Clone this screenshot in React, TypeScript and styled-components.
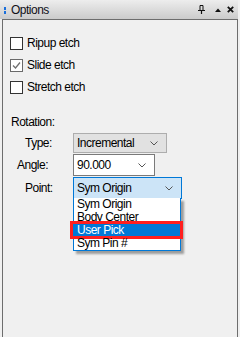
import React from "react";
import styled, { createGlobalStyle } from "styled-components";

const GlobalStyle = createGlobalStyle`
  html, body {
    margin: 0;
    padding: 0;
    background: #f0f0f0;
  }
  body {
    font-family: "Liberation Sans", Arial, sans-serif;
    font-size: 12px;
    letter-spacing: -0.5px;
    color: #000;
  }
`;

const Panel = styled.div`
    width: 238px;
    height: 337px;
    display: flex;
    flex-direction: column;
  `,
  TitleBar = styled.div`
    height: 19px;
    display: flex;
    align-items: center;
    padding: 0 4px 0 4px;
    background: linear-gradient(#ededed, #cbcbcb);
  `,
  Grip = styled.div`
    display: flex;
    flex-direction: column;
    gap: 1px;
    margin-top: 1px;
    &::before,
    &::after {
      content: "";
      width: 2px;
      height: 3px;
      background: #1a6fdc;
    }
  `,
  Title = styled.span`
    margin-left: 5px;
    color: #101018;
    flex: 1;
  `,
  TitleIcons = styled.div`
    display: flex;
    align-items: center;
    gap: 10px;
    & > svg:last-child {
      margin-left: -4px;
    }
  `,
  Body = styled.div`
    flex: 1;
    margin-left: 2px;
    border: 1px solid #6d6d6d;
    border-bottom: none;
    background: #f0f0f0;
    padding: 17px 0 0 7px;
    position: relative;
  `,
  CheckRow = styled.label<{ $first?: boolean }>`
    display: flex;
    align-items: center;
    gap: 4px;
    height: 22px;
    margin-top: ${({ $first }) => ($first ? "-5px" : "0")};
  `,
  Box = styled.span<{ $checked?: boolean }>`
    width: 11px;
    height: 11px;
    border: 1px solid ${({ $checked }) => ($checked ? "#6a6a6a" : "#333")};
    background: #fff;
    display: flex;
    align-items: center;
    justify-content: center;
  `,
  Section = styled.div`
    margin: 16px 0 0 1px;
    height: 16px;
    display: flex;
    align-items: center;
  `,
  FieldRow = styled.div<{ $gap: number }>`
    display: flex;
    align-items: center;
    margin-top: ${({ $gap }) => `${$gap}px`};
    margin-left: -4px;
    position: relative;
  `,
  FieldLabel = styled.span<{ $indent: number }>`
    width: ${({ $indent }) => `${67 - $indent}px`};
    padding-left: ${({ $indent }) => `${$indent}px`};
  `,
  Combo = styled.div<{ $w: number; $h: number; $variant: "gray" | "white" | "focus" }>`
    box-sizing: border-box;
    width: ${({ $w }) => `${$w}px`};
    height: ${({ $h }) => `${$h}px`};
    display: flex;
    align-items: center;
    justify-content: space-between;
    padding: 0 8px 0 3px;
    border: 1px solid
      ${({ $variant }) =>
        $variant === "gray" ? "#adadad" : $variant === "white" ? "#7a7a7a" : "#0078d7"};
    background: ${({ $variant }) =>
      $variant === "gray" ? "#e1e1e1" : $variant === "white" ? "#fff" : "#cce4f7"};
  `,
  DropList = styled.div`
    position: absolute;
    left: 67px;
    top: 21px;
    width: 108px;
    box-sizing: border-box;
    border: 1px solid #0078d7;
    border-top: none;
    background: #fff;
    box-shadow: 3px 3px 2px rgba(0, 0, 0, 0.35);
    z-index: 2;
  `,
  Item = styled.div<{ $selected?: boolean }>`
    position: relative;
    height: 13px;
    line-height: 13px;
    padding-left: 3px;
    background: ${({ $selected }) => ($selected ? "#0078d7" : "transparent")};
    color: ${({ $selected }) => ($selected ? "#fff" : "#000")};
  `,
  Marker = styled.div`
    position: absolute;
    left: -4px;
    right: -3px;
    top: -3px;
    bottom: -2px;
    border: 3px solid #ff1f1f;
    pointer-events: none;
  `;

const Chevron = () => (
  <svg width="8" height="5" viewBox="0 0 8 5">
    <path d="M0.5 0.5 L4 4 L7.5 0.5" fill="none" stroke="#555" strokeWidth="1" />
  </svg>
);

const Check = () => (
  <svg width="11" height="11" viewBox="0 0 11 11">
    <path d="M2 5.5 L4.5 8 L9 2.5" fill="none" stroke="#707070" strokeWidth="1.3" />
  </svg>
);

const PinIcon = () => (
  <svg width="7" height="9" viewBox="0 0 7 9">
    <path d="M2 0.5 H5 V5 M2 0.5 V5" fill="none" stroke="#111" strokeWidth="1" />
    <path d="M0 5.5 H7 M3.5 5.5 V9" fill="none" stroke="#111" strokeWidth="1.2" />
  </svg>
);

const UpIcon = () => (
  <svg width="6" height="4" viewBox="0 0 6 4">
    <path d="M0 4 L3 0.5 L6 4 Z" fill="#111" />
  </svg>
);

const CloseIcon = () => (
  <svg width="7" height="7" viewBox="0 0 7 7">
    <path d="M0.8 0.8 L6.2 6.2 M6.2 0.8 L0.8 6.2" stroke="#111" strokeWidth="1.8" />
  </svg>
);

const options = ["Sym Origin", "Body Center", "User Pick", "Sym Pin #"];

const App: React.FC = () => (
  <>
    <GlobalStyle />
    <Panel>
      <TitleBar>
        <Grip />
        <Title>Options</Title>
        <TitleIcons>
          <PinIcon />
          <UpIcon />
          <CloseIcon />
        </TitleIcons>
      </TitleBar>
      <Body>
        <CheckRow $first>
          <Box />
          Ripup etch
        </CheckRow>
        <CheckRow>
          <Box $checked>
            <Check />
          </Box>
          Slide etch
        </CheckRow>
        <CheckRow>
          <Box />
          Stretch etch
        </CheckRow>

        <Section>Rotation:</Section>

        <FieldRow $gap={3}>
          <FieldLabel $indent={19}>Type:</FieldLabel>
          <Combo $w={94} $h={20} $variant="gray">
            Incremental
            <Chevron />
          </Combo>
        </FieldRow>
        <FieldRow $gap={1}>
          <FieldLabel $indent={11}>Angle:</FieldLabel>
          <Combo $w={82} $h={22} $variant="white">
            90.000
            <Chevron />
          </Combo>
        </FieldRow>
        <FieldRow $gap={1}>
          <FieldLabel $indent={19}>Point:</FieldLabel>
          <Combo $w={109} $h={22} $variant="focus">
            Sym Origin
            <Chevron />
          </Combo>
          <DropList>
            {options.map((o) => (
              <Item key={o} $selected={o === "User Pick"}>
                {o}
                {o === "User Pick" && <Marker />}
              </Item>
            ))}
          </DropList>
        </FieldRow>
      </Body>
    </Panel>
  </>
);

export default App;
